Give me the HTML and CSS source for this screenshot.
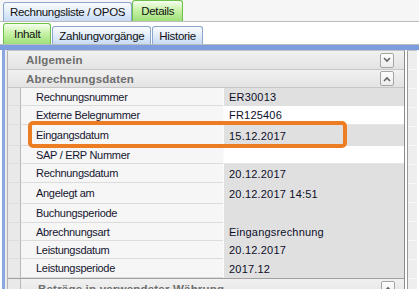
FILE: index.html
```html
<!DOCTYPE html>
<html lang="de">
<head>
    <meta charset="UTF-8">
    <title>Details</title>
    <link rel="stylesheet" href="styles.css">
</head>
<body>
    <div class="app">
        <!-- Main tabs -->
        <div class="tabs tabs-main">
            <div class="tab">Rechnungsliste / OPOS</div>
            <div class="tab active">Details</div>
        </div>

        <!-- Sub tabs -->
        <div class="tabs tabs-sub">
            <div class="tab active">Inhalt</div>
            <div class="tab">Zahlungvorgänge</div>
            <div class="tab">Historie</div>
        </div>

        <div class="blue-bar"></div>

        <div class="content">
            <div class="blue-edge"></div>
            <div class="panel">
                <div class="section-head">
                    <span>Allgemein</span>
                    <span class="toggle">
                        <svg width="8" height="6" viewBox="0 0 8 6"><path d="M1 1 L4 4 L7 1" fill="none" stroke="#666" stroke-width="1.6"/></svg>
                    </span>
                </div>
                <div class="section-head">
                    <span>Abrechnungsdaten</span>
                    <span class="toggle">
                        <svg width="8" height="6" viewBox="0 0 8 6"><path d="M1 5 L4 2 L7 5" fill="none" stroke="#666" stroke-width="1.6"/></svg>
                    </span>
                </div>

                <div class="rows">
                    <div class="row"><div class="gutter"></div><div class="label">Rechnungsnummer</div><div class="value">ER30013</div></div>
                    <div class="row mid"><div class="gutter"></div><div class="label">Externe Belegnummer</div><div class="value editable">FR125406</div></div>
                    <div class="row tall"><div class="gutter"></div><div class="label">Eingangsdatum</div><div class="value">15.12.2017</div></div>
                    <div class="row"><div class="gutter"></div><div class="label">SAP / ERP Nummer</div><div class="value editable"></div></div>
                    <div class="row mid"><div class="gutter"></div><div class="label">Rechnungsdatum</div><div class="value">20.12.2017</div></div>
                    <div class="row tall"><div class="gutter"></div><div class="label">Angelegt am</div><div class="value">20.12.2017 14:51</div></div>
                    <div class="row mid"><div class="gutter"></div><div class="label">Buchungsperiode</div><div class="value"></div></div>
                    <div class="row"><div class="gutter"></div><div class="label">Abrechnungsart</div><div class="value">Eingangsrechnung</div></div>
                    <div class="row"><div class="gutter"></div><div class="label">Leistungsdatum</div><div class="value">20.12.2017</div></div>
                    <div class="row mid"><div class="gutter"></div><div class="label">Leistungsperiode</div><div class="value">2017.12</div></div>
                    <div class="row sub-row">
                        <div class="gutter"></div>
                        <div class="section-head sub">
                            <span>Beträge in verwendeter Währung</span>
                            <span class="toggle">
                                <svg width="8" height="6" viewBox="0 0 8 6"><path d="M1 5 L4 2 L7 5" fill="none" stroke="#666" stroke-width="1.6"/></svg>
                            </span>
                        </div>
                    </div>
                </div>
            </div>
            <div class="side-col">
                <div class="side-row"></div>
                <div class="side-row"></div>
                <div class="side-row"></div>
                <div class="side-row"></div>
                <div class="side-row"></div>
                <div class="side-row"></div>
                <div class="side-row"></div>
                <div class="side-row"></div>
                <div class="side-row"></div>
                <div class="side-row"></div>
                <div class="side-row"></div>
                <div class="side-row"></div>
            </div>
        </div>

        <!-- Annotation box -->
        <div class="highlight"></div>
    </div>
</body>
</html>
```

FILE: styles.css
```css
* {
    box-sizing: border-box;
}

body {
    margin: 0;
    padding: 0;
    font-family: 'Liberation Sans', Arial, sans-serif;
    font-size: 11px;
    letter-spacing: -0.3px;
    background-color: #fff;
    overflow: hidden;
}

.app {
    position: relative;
    width: 419px;
    height: 289px;
    overflow: hidden;
}

/* Tabs */
.tabs {
    display: flex;
    align-items: flex-end;
    padding-left: 3px;
    gap: 1px;
    border-bottom: 1px solid #bcbcbc;
}

.tabs-main {
    height: 22px;
    gap: 0;
    background-color: #f6f6f6;
}

.tabs-sub {
    height: 23px;
    background-color: #fff;
}

.tab {
    height: 19px;
    padding: 0 6px;
    display: flex;
    align-items: center;
    color: #111;
    font-size: 11.5px;
    border: 1px solid #8ba6cf;
    border-bottom: none;
    border-radius: 3px 3px 0 0;
    background: linear-gradient(#fbfcfe, #e4eefa 45%, #c7dbf5);
    white-space: nowrap;
}

.tabs-sub .tab {
    height: 18px;
}

.tab.active,
.tabs-sub .tab.active {
    height: 21px;
    padding: 0 8px;
    border-color: #6fbf4c;
    background: linear-gradient(#f6fff0, #c8f2a8 45%, #9ee07a);
}

.tabs-sub .tab.active {
    padding: 0 10px;
}

.blue-bar {
    height: 5px;
    background-color: #7e9ddf;
}

/* Content */
.content {
    display: flex;
    height: 239px;
}

.blue-edge {
    width: 5px;
    margin-left: 2px;
    background-color: #8ca6e0;
    border-right: 2px solid #ececec;
}

.panel {
    width: 398px;
    border-left: 1px solid #b5b5b5;
    border-top: 1px solid #c4c4c4;
    border-right: 1px solid #8a8a8a;
    background-color: #ececec;
}

.section-head {
    height: 19px;
    display: flex;
    align-items: center;
    justify-content: space-between;
    padding-left: 18px;
    padding-right: 10px;
    font-size: 11.5px;
    font-weight: bold;
    letter-spacing: 0.2px;
    color: #6e6e6e;
    background: linear-gradient(#f1f1f1, #e3e3e3);
    border-bottom: 1px solid #c6c6c6;
}

.section-head + .section-head {
    height: 18px;
}

.section-head.sub {
    flex: 1;
    height: auto;
    border-bottom: none;
    padding-left: 17px;
    padding-right: 9px;
}

.toggle {
    width: 14px;
    height: 15px;
    display: flex;
    align-items: center;
    justify-content: center;
    border: 1px solid #a5a5a5;
    border-radius: 2px;
    background: linear-gradient(#fdfdfd, #ececec);
}

.rows {
    display: flex;
    flex-direction: column;
}

.row {
    display: flex;
    height: 18px;
}

.row.mid {
    height: 19px;
}

.row.tall {
    height: 21px;
}

.row.sub-row {
    height: 20px;
    border-top: 1px solid #a0a0a0;
}

.gutter {
    width: 13px;
    background-color: #e9e9e9;
    border-right: 1px solid #b8b8b8;
    border-bottom: 1px solid #dedede;
}

.sub-row .gutter {
    border-bottom: none;
}

.label {
    width: 202px;
    padding-left: 15px;
    display: flex;
    align-items: center;
    color: #151530;
    background-color: #f6f6f6;
    border-bottom: 1px solid #dcdcdc;
}

.value {
    flex: 1;
    padding-left: 5px;
    display: flex;
    align-items: center;
    color: #0d0d2a;
    letter-spacing: 0.2px;
    background-color: #e0e0e0;
    border-left: 1px solid #fafafa;
}

.value.editable {
    background-color: #fff;
    border-bottom: 1px solid #e6e6e6;
}

/* Right column */
.side-col {
    width: 10px;
    margin-left: 2px;
    border-left: 1px solid #9a9a9a;
    border-top: 1px solid #c4c4c4;
    background-color: #eeeeee;
}

.side-row {
    height: 19px;
    border-bottom: 1px solid #f8f8f8;
}

/* Orange annotation */
.highlight {
    position: absolute;
    left: 28px;
    top: 121px;
    width: 319px;
    height: 27px;
    border: 4px solid #ed7d22;
    border-radius: 5px;
}
```
